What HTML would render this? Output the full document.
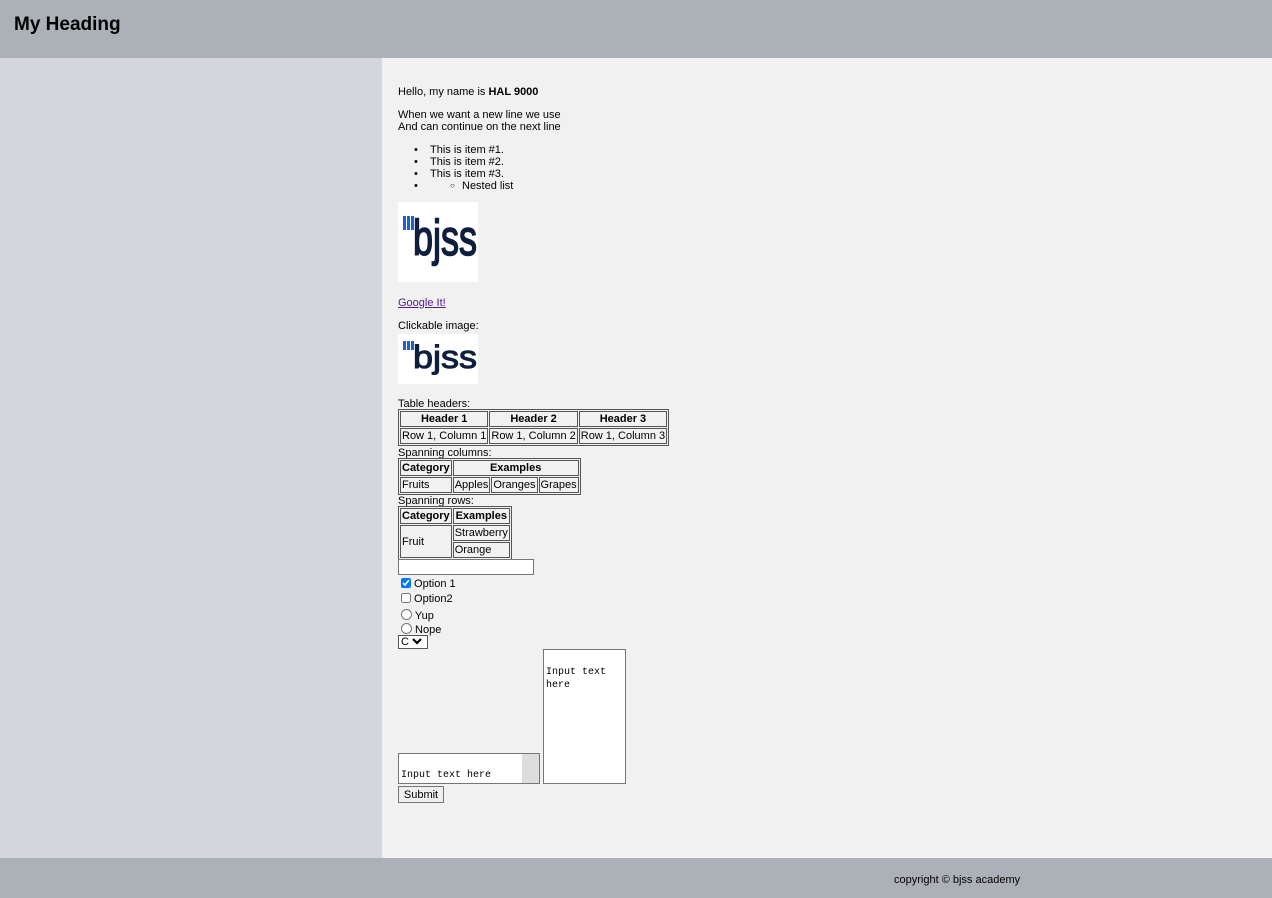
<!DOCTYPE html>
<html><head><style>
*{box-sizing:border-box}
body{margin:0;width:1272px;height:898px;font-family:"Liberation Sans",Arial,sans-serif;font-size:11px;color:#000;background:#f1f1f1;position:relative;overflow:hidden}
.hdr{position:absolute;left:0;top:0;width:1272px;height:58px;background:#abb1b7}
.hdr h1{margin:0;position:absolute;left:14px;top:14px;font-size:19px;font-weight:bold}
.side{position:absolute;left:0;top:58px;width:382px;height:800px;background:#d3d6da}
.ftr{position:absolute;left:0;top:858px;width:1272px;height:40px;background:#abb1b7}
.ftr span{position:absolute;left:894px;top:16px;font-size:11px}
.a{position:absolute;left:398px;line-height:12px;white-space:nowrap}
table{border-collapse:separate;border:1px solid #555;border-spacing:1px;font-size:11px}
td,th{border:1px solid #555;padding:1px 1px;line-height:12px}
.logo{background:#fff;position:absolute;left:398px}
</style></head><body>
<div class="hdr"><h1>My Heading</h1></div>
<div class="side"></div>
<div class="a" style="top:86px">Hello, my name is <b>HAL 9000</b></div>
<div class="a" style="top:109px">When we want a new line we use<br>And can continue on the next line</div>
<div class="a" style="top:144px;left:414px">
<div>•<span style="position:absolute;left:16px">This is item #1.</span></div>
<div>•<span style="position:absolute;left:16px">This is item #2.</span></div>
<div>•<span style="position:absolute;left:16px">This is item #3.</span></div>
<div>•<span style="position:absolute;left:36px;font-size:8px">○</span><span style="position:absolute;left:48px">Nested list</span></div>
</div>
<div class="logo" style="top:202px;width:80px;height:80px">
<svg width="80" height="80"><g fill="#1f5fd1"><rect x="5" y="14" width="3" height="14"/><rect x="9" y="14" width="3" height="14"/><rect x="13" y="14" width="3" height="14"/></g>
<text x="0" y="0" font-family="Liberation Sans" font-size="50" fill="#0f1f3d" stroke="#0f1f3d" stroke-width="1.6" transform="translate(15,53) scale(0.72,1)">bjss</text></svg></div>
<div class="a" style="top:297px"><a href="#" style="color:#551a8b">Google It!</a></div>
<div class="a" style="top:320px">Clickable image:</div>
<div class="logo" style="top:334px;width:80px;height:50px">
<svg width="80" height="50"><g fill="#1f5fd1"><rect x="5" y="7" width="3" height="9"/><rect x="9" y="7" width="3" height="9"/><rect x="13" y="7" width="3" height="9"/></g>
<text x="0" y="0" font-family="Liberation Sans" font-size="50" fill="#0f1f3d" stroke="#0f1f3d" stroke-width="1.6" transform="translate(15,34) scale(0.72,0.64)">bjss</text></svg></div>
<div class="a" style="top:398px">Table headers:</div>
<div class="a" style="top:409px"><table><tr><th>Header 1</th><th>Header 2</th><th>Header 3</th></tr><tr><td>Row 1, Column 1</td><td>Row 1, Column 2</td><td>Row 1, Column 3</td></tr></table></div>
<div class="a" style="top:447px">Spanning columns:</div>
<div class="a" style="top:458px"><table><tr><th>Category</th><th colspan="3">Examples</th></tr><tr><td>Fruits</td><td>Apples</td><td>Oranges</td><td>Grapes</td></tr></table></div>
<div class="a" style="top:495px">Spanning rows:</div>
<div class="a" style="top:506px"><table><tr><th>Category</th><th>Examples</th></tr><tr><td rowspan="2">Fruit</td><td>Strawberry</td></tr><tr><td>Orange</td></tr></table></div>
<div class="a" style="top:559px;width:136px;height:16px;background:#fff;border:1px solid #767676"></div>
<div class="a" style="top:578px;left:401px"><input type="checkbox" checked style="margin:0;width:10px;height:10px;vertical-align:-1px"> Option 1</div>
<div class="a" style="top:593px;left:401px"><input type="checkbox" style="margin:0;width:10px;height:10px;vertical-align:-1px"> Option2</div>
<div class="a" style="top:609px;left:401px"><input type="radio" style="margin:0;width:11px;height:11px;vertical-align:-1px"> Yup</div>
<div class="a" style="top:623px;left:401px"><input type="radio" style="margin:0;width:11px;height:11px;vertical-align:-1px"> Nope</div>
<div class="a" style="top:635px;width:30px;height:14px;border:1px solid #555;background:#fff;font-size:11px;padding-left:2px;line-height:12px">C <svg width="10" height="8" style="vertical-align:0"><path d="M1 2 L5 6 L9 2" stroke="#000" stroke-width="2.2" fill="none"/></svg></div>
<div class="a" style="top:753px;width:142px;height:31px;background:#fff;border:1px solid #767676;font-family:'Liberation Mono',monospace;font-size:10px;padding:16px 2px 0"><span>Input text here</span><div style="position:absolute;right:0;top:0;width:17px;height:29px;background:#ddd"></div></div>
<div class="a" style="top:649px;left:543px;width:83px;height:135px;background:#fff;border:1px solid #767676;font-family:'Liberation Mono',monospace;font-size:10px;padding:16px 2px 0;line-height:13px;white-space:normal">Input text here</div>
<div class="a" style="top:786px;width:46px;height:17px;border:1px solid #767676;background:#efefef;text-align:center;line-height:16px">Submit</div>
<div class="ftr"><span>copyright © bjss academy</span></div>
</body></html>
